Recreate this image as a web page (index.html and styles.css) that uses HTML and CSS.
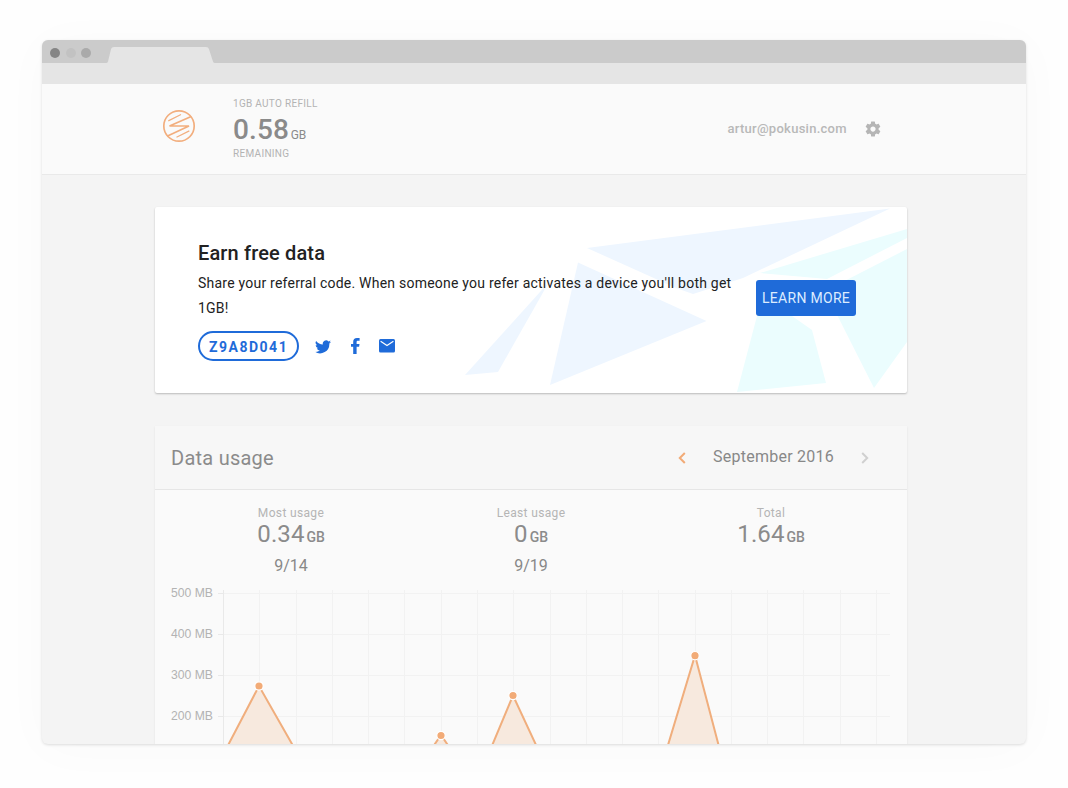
FILE: index.html
```html
<!DOCTYPE html>
<html lang="en">
<head>
<meta charset="utf-8">
<title>Data usage</title>
<link rel="stylesheet" href="styles.css">
</head>
<body>
<div class="window">
  <div class="titlebar">
    <i class="dot dot-dark"></i><i class="dot dot-light"></i><i class="dot dot-mid"></i>
    <svg class="tab" width="109" height="16" viewBox="0 0 108 16" preserveAspectRatio="none"><path d="M0 16Q1.500 16 2 14.500L5 2Q5.500 0 8 0H99Q101.500 0 102 2L106 14.500Q106.500 16 108 16Z" fill="#e5e5e5"/></svg>
  </div>
  <div class="toolbar"></div>
  <header class="header">
    <svg class="logo" width="34" height="34" viewBox="0 0 34 34" fill="none" stroke="#f2ae7e" stroke-linejoin="bevel">
      <circle cx="17" cy="17" r="15.200" stroke-width="1.700"/>
      <path d="M29.200 7.500L7.500 17H27L5 27.300" stroke-width="1.700"/>
      <path d="M6.300 11.900L19 5.500M14.500 28.200L27.300 21.900" stroke-width="1.200"/>
    </svg>
    <div class="balance">
      <div class="caption">1GB AUTO REFILL</div>
      <div class="amount">0.58<span class="amount-unit">GB</span></div>
      <div class="caption">REMAINING</div>
    </div>
    <div class="email">artur@pokusin.com</div>
    <svg class="gear" width="18" height="18" viewBox="0 0 24 24" fill="#b5b5b5"><path d="M19.430 12.980c.04-.32.070-.64.070-.98s-.03-.66-.07-.98l2.110-1.650c.19-.15.240-.42.120-.64l-2-3.460c-.12-.22-.39-.3-.61-.22l-2.490 1c-.52-.4-1.080-.73-1.690-.98l-.38-2.650A.488.488 0 0 0 14 2h-4c-.25 0-.46.180-.49.420l-.38 2.650c-.61.250-1.170.590-1.690.980l-2.490-1c-.23-.09-.49 0-.61.220l-2 3.460c-.13.220-.07.490.120.640l2.110 1.650c-.04.320-.07.650-.07.980s.03.660.070.980l-2.110 1.650c-.19.150-.24.420-.12.640l2 3.460c.12.220.390.300.610.220l2.490-1c.52.400 1.080.730 1.690.980l.38 2.650c.03.240.240.420.490.420h4c.25 0 .46-.18.490-.42l.38-2.650c.61-.25 1.170-.59 1.690-.98l2.490 1c.23.090.490 0 .61-.22l2-3.460c.12-.22.070-.49-.12-.64l-2.110-1.650zM12 15.500c-1.930 0-3.500-1.570-3.500-3.500s1.570-3.500 3.500-3.500 3.500 1.570 3.500 3.500-1.570 3.500-3.500 3.500z"/></svg>
  </header>
  <main class="content">
    <section class="promo">
      <svg class="facets" width="752" height="186" viewBox="0 0 752 186">
        <g fill="#eef6ff"><path d="M432 41L735 1.500L588 71L538 87L521 81Z"/><path d="M423 55.500L551.500 114L395 178Z"/><path d="M310 168L343 165L394 75Z"/></g>
        <g fill="#ebfdfe"><path d="M605 66L752 22V31L672 72Z"/><path d="M752 42L670 84L719 181L752 135Z"/><path d="M602 109L637 109L657 123L671 176L582 185Z"/></g>
      </svg>
      <div class="promo-text">
        <h2>Earn free data</h2>
        <p>Share your referral code. When someone you refer activates a device you'll both get 1GB!</p>
        <div class="share">
          <span class="code">Z9A8D041</span>
          <svg class="twitter" width="16" height="14" viewBox="0 0 24 20" fill="#1f6bd9"><path d="M24 2.300a10 10 0 0 1-2.800.8A5 5 0 0 0 23.300.4a10 10 0 0 1-3.100 1.200 4.900 4.900 0 0 0-8.400 4.500A14 14 0 0 1 1.700.9a4.900 4.900 0 0 0 1.500 6.600 5 5 0 0 1-2.200-.6 4.900 4.900 0 0 0 3.900 4.900 5 5 0 0 1-2.200.1 4.900 4.900 0 0 0 4.600 3.400A10 10 0 0 1 0 17.300a14 14 0 0 0 21.500-12.500A10 10 0 0 0 24 2.300Z"/></svg>
          <svg class="facebook" width="9" height="16" viewBox="0 0 9 16" fill="#1f6bd9"><path d="M2.200 16V8.800H0V5.900H2.200V3.900C2.200 1.300 3.500 0 6 0H8.600V2.800H7C6 2.800 5.600 3.200 5.600 4.200V5.900H8.500L8.100 8.800H5.600V16Z"/></svg>
          <svg class="mail" width="16" height="14" viewBox="0 0 16 14"><rect width="16" height="13.500" rx="1.500" fill="#1f6bd9"/><path d="M1.600 2.300L8 6.500L14.400 2.300" fill="none" stroke="#fff" stroke-width="1.200"/></svg>
        </div>
      </div>
      <a class="button">LEARN MORE</a>
    </section>
    <section class="usage">
      <div class="usage-head">
        <h3>Data usage</h3>
        <svg class="chevron" width="8" height="12" viewBox="0 0 8 12" fill="none" stroke="#f2ab77" stroke-width="2"><path d="M6.800 1L1.800 6L6.800 11"/></svg>
        <span class="month">September 2016</span>
        <svg class="chevron" width="8" height="12" viewBox="0 0 8 12" fill="none" stroke="#d0d0d0" stroke-width="2"><path d="M1.200 1L6.200 6L1.200 11"/></svg>
      </div>
      <div class="stats">
        <div class="stat"><div class="label">Most usage</div><div class="value">0.34<span class="unit">GB</span></div><div class="date">9/14</div></div>
        <div class="stat"><div class="label">Least usage</div><div class="value">0<span class="unit">GB</span></div><div class="date">9/19</div></div>
        <div class="stat"><div class="label">Total</div><div class="value">1.64<span class="unit">GB</span></div></div>
      </div>
      <svg class="chart" width="752" height="160" viewBox="155 584 752 160">
        <path class="grid" d="M218 593.500H890M218 634.500H890M218 675.500H890M218 716.500H890M259.500 590V744M296.500 590V744M332.500 590V744M368.500 590V744M404.500 590V744M441.500 590V744M477.500 590V744M513.500 590V744M550.500 590V744M586.500 590V744M622.500 590V744M658.500 590V744M695.500 590V744M731.500 590V744M767.500 590V744M803.500 590V744M840.500 590V744M876.500 590V744"/>
        <path class="axis" d="M223.500 590V744M218 593.500H223M218 634.500H223M218 675.500H223M218 716.500H223"/>
        <g class="series"><path d="M224 753L259 686L296 751"/><path d="M424 760L441 735L458 760"/><path d="M486 760L513 695.500L543 760"/><path d="M663.500 760L695 655.500L722.500 760"/></g>
        <g class="points"><circle cx="259" cy="686" r="4.200"/><circle cx="441" cy="735.500" r="4.200"/><circle cx="513" cy="695.500" r="4.200"/><circle cx="695" cy="655.700" r="4.200"/></g>
        <g class="ticks"><text x="213" y="597">500 MB</text><text x="213" y="638">400 MB</text><text x="213" y="679">300 MB</text><text x="213" y="720">200 MB</text></g>
      </svg>
    </section>
  </main>
</div>
</body>
</html>
```
FILE: styles.css
```css
* { box-sizing: border-box; }
body { margin: 0; height: 788px; padding: 40px 42px 44px; overflow: hidden; background: #fefefe; font-family: Roboto, sans-serif; color: #888; }
svg { display: block; flex: none; }
h2, h3, p { margin: 0; }
.window { width: 984px; height: 704px; overflow: hidden; border-radius: 6px; background: #f4f4f4; box-shadow: 0 1px 3px rgba(0,0,0,.13), 0 4px 50px rgba(0,0,0,.025); }
.titlebar { height: 23px; padding: 0 8px; display: flex; align-items: center; gap: 5.500px; background: #cbcbcb; }
.dot { width: 10px; height: 10px; border-radius: 50%; margin-top: 2px; }
.dot-dark { background: #858585; }
.dot-light { background: #c2c2c2; }
.dot-mid { background: #aaa; }
.tab { align-self: flex-end; margin-left: 9px; }
.toolbar { height: 21px; background: #e5e5e5; }
.header { height: 91px; display: flex; background: #fafafa; border-bottom: 1px solid #e9e9e9; padding-left: 120px; }
.logo { margin-top: 25px; }
.balance { width: 494px; margin-left: 37px; padding-top: 14px; white-space: nowrap; }
.caption { font-size: 10px; line-height: 12px; color: #b3b3b3; letter-spacing: .3px; }
.amount { height: 38px; font-size: 28px; line-height: 40px; font-weight: 500; letter-spacing: .15px; color: #8a8a8a; }
.amount-unit { font-size: 12px; font-weight: 400; margin-left: 1.500px; letter-spacing: 0; }
.email { width: 138px; margin-top: 37px; padding-left: .5px; font-size: 13px; line-height: 16px; font-weight: 500; letter-spacing: .27px; color: #b8b8b8; }
.gear { margin-top: 36px; margin-left: -1px; }
.content { width: 752px; margin: 32px 0 0 113px; }
.promo { height: 186px; display: flex; position: relative; background: #fff; border-radius: 2px; overflow: hidden; box-shadow: 0 1px 2px rgba(0,0,0,.24); padding-left: 43px; }
.facets { position: absolute; inset: 0; }
.promo-text { position: relative; width: 558px; padding-top: 34px; color: #222; }
h2 { font-size: 20px; line-height: 24px; font-weight: 500; letter-spacing: .14px; }
p { margin-top: 6px; width: 545px; font-size: 14px; line-height: 25px; letter-spacing: .225px; }
.share { margin-top: 10px; display: flex; align-items: center; }
.code { width: 101px; height: 30px; border: 2px solid #1f6bd9; border-radius: 15px; padding-left: 9px; font-size: 14px; line-height: 28px; font-weight: 700; letter-spacing: 1.500px; color: #1f6bd9; }
.twitter { margin-left: 16px; margin-top: 1px; }
.facebook { margin-left: 20px; }
.mail { margin-left: 19px; }
.button { position: relative; width: 100px; height: 36px; margin-top: 73px; border-radius: 3px; background: #1f6bd9; color: #dcecff; font-size: 14px; line-height: 36px; text-align: center; letter-spacing: .3px; }
.usage { margin-top: 33px; height: 330px; background: #fafafa; box-shadow: 0 1px 2px rgba(0,0,0,.08); }
.usage-head { height: 64px; padding-left: 16px; display: flex; align-items: center; background: #f7f7f7; border-bottom: 1px solid #e6e6e6; }
h3 { width: 506.500px; font-size: 20px; font-weight: 400; letter-spacing: .25px; color: #8b8b8b; }
.month { width: 121px; margin: -2px 27px 0 27.500px; font-size: 16px; letter-spacing: .25px; white-space: nowrap; }
.stats { display: flex; padding: 15px 16px 0; height: 94px; }
.stat { flex: 1; text-align: center; }
.label { font-size: 12px; line-height: 16px; letter-spacing: .35px; color: #b5b5b5; }
.value { height: 28px; font-size: 24px; line-height: 26px; letter-spacing: .1px; color: #8b8b8b; }
.unit { font-size: 14px; font-weight: 500; margin-left: 2px; letter-spacing: -.1px; }
.date { margin-top: 8px; font-size: 16px; line-height: 18px; }
.grid { fill: none; stroke: #f2f2f2; }
.axis { fill: none; stroke: #e9e9e9; }
.series { fill: #f7e9de; stroke: #f0ae7d; stroke-width: 2; }
.points { fill: #f2ab77; stroke: #fff; stroke-width: 1.200; }
.ticks { fill: #b3b3b3; font: 12.200px "Liberation Sans", sans-serif; text-anchor: end; }
```
